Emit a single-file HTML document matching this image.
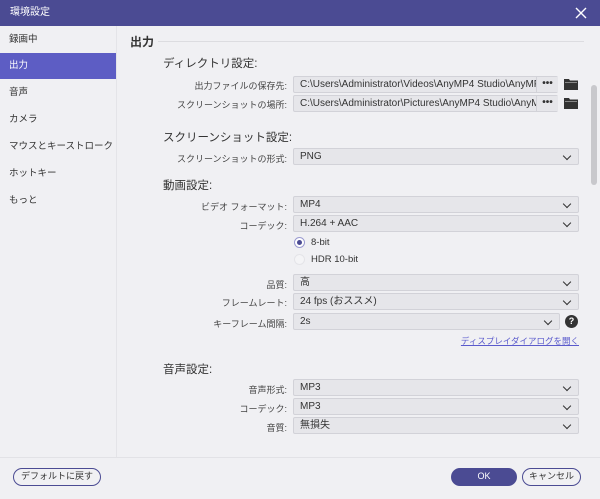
<!DOCTYPE html><html><head><meta charset="utf-8"><style>
*{margin:0;padding:0;box-sizing:border-box}
body{width:600px;height:499px;background:#f0f0f3;font-family:"Liberation Sans","Noto Sans CJK JP",sans-serif;position:relative;overflow:hidden;color:#333}
.a{position:absolute;white-space:nowrap}
.tb{left:0;top:0;width:600px;height:26px;background:#4b4b93;color:#fff;font-size:10px;line-height:26px;padding-left:10px}
.side{left:0;top:26px;width:117px;height:431px;background:#f0f0f3;border-right:1px solid #e4e4e8}
.si{left:0;width:116px;height:26px;line-height:26px;padding-left:9px;font-size:9.5px;color:#333}
.lbl{font-size:9px;color:#444;text-align:right;right:313px}
.h{font-size:11.5px;color:#333}
.dd{left:293px;width:286px;height:17px;background:#e6e6ea;border:1px solid #d2d2d8;border-radius:2px;font-size:10px;line-height:16px;padding-left:6px;color:#333}
.dd::after{content:"";position:absolute;right:8px;top:4px;width:5px;height:5px;border-right:1.5px solid #333;border-bottom:1.5px solid #333;transform:rotate(45deg)}
.btn{height:17px;border:1.5px solid #4b4b93;border-radius:9px;font-size:9px;line-height:14px;text-align:center;color:#333}
</style></head><body>
<div class="a tb">環境設定</div>
<svg class="a" style="left:575px;top:7px" width="12" height="12"><path d="M1 1L11 11M11 1L1 11" stroke="#fff" stroke-width="1.4"/></svg>
<div class="a side"></div>
<div class="a si" style="top:27px">録画中</div>
<div class="a si" style="top:53px;background:#5d5dc4;color:#fff">出力</div>
<div class="a si" style="top:80px">音声</div>
<div class="a si" style="top:107px">カメラ</div>
<div class="a si" style="top:134px">マウスとキーストローク</div>
<div class="a si" style="top:161px">ホットキー</div>
<div class="a si" style="top:188px">もっと</div>
<div class="a" style="left:130px;top:33px;font-size:12px;font-weight:bold;color:#333">出力</div>
<div class="a" style="left:158px;top:41px;width:426px;height:1px;background:#dcdce0"></div>
<div class="a h" style="left:163px;top:55px">ディレクトリ設定:</div>
<div class="a lbl" style="top:79px">出力ファイルの保存先:</div>
<div class="a lbl" style="top:98px">スクリーンショットの場所:</div>
<div class="a dd" style="top:76px;width:265px;overflow:hidden">C:\Users\Administrator\Videos\AnyMP4 Studio\AnyMP</div>
<div class="a dd" style="top:95px;width:265px;overflow:hidden">C:\Users\Administrator\Pictures\AnyMP4 Studio\AnyM</div>
<div class="a" style="left:536px;top:77px;width:22px;height:15px;border-left:1px solid #d2d2d8;background:#e6e6ea;font-size:10px;font-weight:bold;text-align:center;line-height:14px">•••</div>
<div class="a" style="left:536px;top:96px;width:22px;height:15px;border-left:1px solid #d2d2d8;background:#e6e6ea;font-size:10px;font-weight:bold;text-align:center;line-height:14px">•••</div>
<svg class="a" style="left:564px;top:78px" width="14" height="12"><path d="M0 1h5l1 1.5h8V12H0z" fill="#333"/><rect x="1" y="4" width="12" height="1" fill="#888"/></svg>
<svg class="a" style="left:564px;top:97px" width="14" height="12"><path d="M0 1h5l1 1.5h8V12H0z" fill="#333"/><rect x="1" y="4" width="12" height="1" fill="#888"/></svg>
<div class="a h" style="left:163px;top:129px">スクリーンショット設定:</div>
<div class="a lbl" style="top:152px">スクリーンショットの形式:</div>
<div class="a dd" style="top:148px">PNG</div>
<div class="a h" style="left:163px;top:177px">動画設定:</div>
<div class="a lbl" style="top:200px">ビデオ フォーマット:</div>
<div class="a dd" style="top:196px">MP4</div>
<div class="a lbl" style="top:219px">コーデック:</div>
<div class="a dd" style="top:215px">H.264 + AAC</div>
<div class="a" style="left:294px;top:237px;width:11px;height:11px;border-radius:50%;border:1px solid #9a9ad0;background:#fff"></div>
<div class="a" style="left:297px;top:240px;width:5px;height:5px;border-radius:50%;background:#4b4b93"></div>
<div class="a" style="left:311px;top:237px;font-size:9.5px">8-bit</div>
<div class="a" style="left:294px;top:254px;width:11px;height:11px;border-radius:50%;border:1px solid #e4e4e8;background:#f4f4f6"></div>
<div class="a" style="left:311px;top:254px;font-size:9.5px">HDR 10-bit</div>
<div class="a lbl" style="top:278px">品質:</div>
<div class="a dd" style="top:274px">高</div>
<div class="a lbl" style="top:296px">フレームレート:</div>
<div class="a dd" style="top:293px">24 fps (おススメ)</div>
<div class="a lbl" style="top:317px">キーフレーム間隔:</div>
<div class="a dd" style="top:313px;width:267px">2s</div>
<div class="a" style="left:565px;top:315px;width:13px;height:13px;border-radius:50%;background:#333;color:#fff;font-size:9px;font-weight:bold;text-align:center;line-height:13px">?</div>
<div class="a" style="right:21px;top:335px;font-size:8.5px;color:#5a5acc;text-decoration:underline">ディスプレイダイアログを開く</div>
<div class="a h" style="left:163px;top:361px">音声設定:</div>
<div class="a lbl" style="top:383px">音声形式:</div>
<div class="a dd" style="top:379px">MP3</div>
<div class="a lbl" style="top:402px">コーデック:</div>
<div class="a dd" style="top:398px">MP3</div>
<div class="a lbl" style="top:421px">音質:</div>
<div class="a dd" style="top:417px">無損失</div>
<div class="a" style="left:591px;top:85px;width:6px;height:100px;background:#c8c8cc;border-radius:3px"></div>
<div class="a" style="left:0;top:457px;width:600px;height:1px;background:#e2e2e6"></div>
<div class="a btn" style="left:13px;top:468px;width:88px;height:18px;line-height:15px">デフォルトに戻す</div>
<div class="a btn" style="left:451px;top:468px;width:66px;height:18px;line-height:15px;background:#4b4b93;color:#fff">OK</div>
<div class="a btn" style="left:522px;top:468px;width:59px;height:18px;line-height:15px">キャンセル</div>
</body></html>
